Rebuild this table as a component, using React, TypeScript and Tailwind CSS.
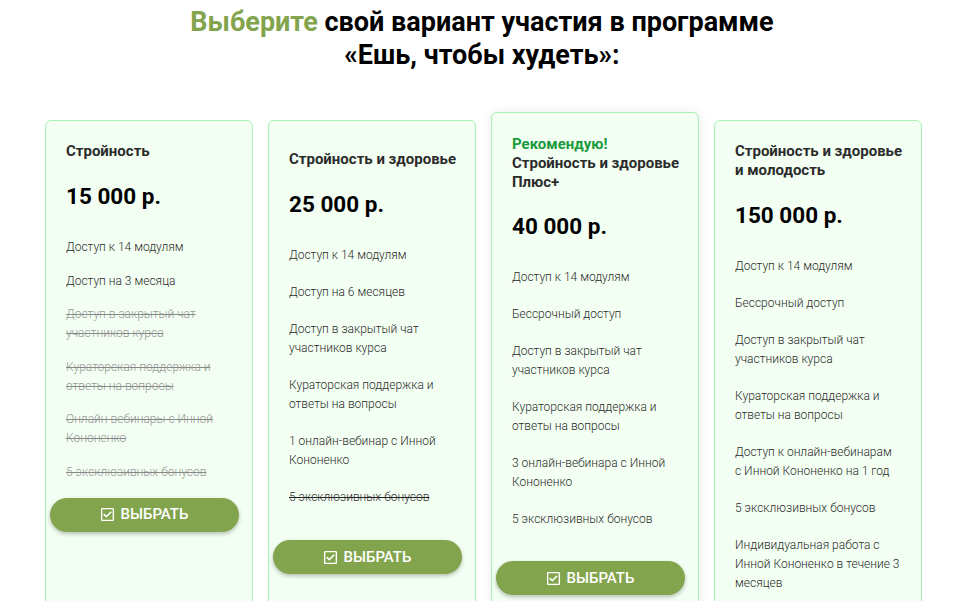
import { FaRegCheckSquare } from 'react-icons/fa';

type Feature = { text: string; off?: boolean; dark?: boolean };

type Plan = {
  badge?: string;
  title: string[];
  price: string;
  features: Feature[];
  pad: string;
  priceGap: string;
  gap: string;
  btnGap: string;
  raised?: boolean;
};

const plans: Plan[] = [
  {
    title: ['Стройность'],
    price: '15 000 р.',
    pad: 'pt-[21px]',
    priceGap: 'mt-[22px]',
    gap: 'gap-[14.5px]',
    btnGap: 'mt-[16px]',
    features: [
      { text: 'Доступ к 14 модулям' },
      { text: 'Доступ на 3 месяца' },
      { text: 'Доступ в закрытый чат участников курса', off: true },
      { text: 'Кураторская поддержка и ответы на вопросы', off: true },
      { text: 'Онлайн вебинары с Инной Кононенко', off: true },
      { text: '5 эксклюзивных бонусов', off: true },
    ],
  },
  {
    title: ['Стройность и здоровье'],
    price: '25 000 р.',
    pad: 'pt-[29px]',
    priceGap: 'mt-[22px]',
    gap: 'gap-[18px]',
    btnGap: 'mt-[33px]',
    features: [
      { text: 'Доступ к 14 модулям' },
      { text: 'Доступ на 6 месяцев' },
      { text: 'Доступ в закрытый чат участников курса' },
      { text: 'Кураторская поддержка и ответы на вопросы' },
      { text: '1 онлайн-вебинар с Инной Кононенко' },
      { text: '5 эксклюзивных бонусов', off: true, dark: true },
    ],
  },
  {
    badge: 'Рекомендую!',
    title: ['Стройность и здоровье', 'Плюс+'],
    price: '40 000 р.',
    pad: 'pt-[22px]',
    priceGap: 'mt-[21px]',
    gap: 'gap-[18px]',
    btnGap: 'mt-[32px]',
    raised: true,
    features: [
      { text: 'Доступ к 14 модулям' },
      { text: 'Бессрочный доступ' },
      { text: 'Доступ в закрытый чат участников курса' },
      { text: 'Кураторская поддержка и ответы на вопросы' },
      { text: '3 онлайн-вебинара с Инной Кононенко' },
      { text: '5 эксклюзивных бонусов' },
    ],
  },
  {
    title: ['Стройность и здоровье', 'и молодость'],
    price: '150 000 р.',
    pad: 'pt-[21px]',
    priceGap: 'mt-[22px]',
    gap: 'gap-[18px]',
    btnGap: 'mt-[33px]',
    features: [
      { text: 'Доступ к 14 модулям' },
      { text: 'Бессрочный доступ' },
      { text: 'Доступ в закрытый чат участников курса' },
      { text: 'Кураторская поддержка и ответы на вопросы' },
      { text: 'Доступ к онлайн-вебинарам с\u00a0Инной Кононенко на 1 год' },
      { text: '5 эксклюзивных бонусов' },
      { text: 'Индивидуальная работа с Инной Кононенко в течение 3 месяцев' },
    ],
  },
];

function PlanCard({ plan }: { plan: Plan }) {
  return (
    <div
      className={`w-[208px] shrink-0 rounded-[6px] border border-[#a6f2b6] bg-[#f3fff3] pb-[60px] ${plan.pad} ${
        plan.raised ? '-mt-[8px] shadow-[0_0_12px_rgba(0,0,0,0.08)]' : ''
      }`}
    >
      <div className="px-[20px]">
        <div className="whitespace-nowrap text-[15px] font-bold leading-[19px] text-[#2b2b2b]">
          {plan.badge && <div className="text-[#1a9a3c]">{plan.badge}</div>}
          {plan.title.map((t) => (
            <div key={t}>{t}</div>
          ))}
        </div>
        <div className={`${plan.priceGap} text-[22.5px] font-bold leading-[26px] text-black`}>{plan.price}</div>
        <ul className={`mt-[29px] flex flex-col ${plan.gap} text-[12px] font-light leading-[19px]`}>
          {plan.features.map((f) => (
            <li
              key={f.text}
              className={
                f.off
                  ? f.dark
                    ? 'text-[#333] line-through decoration-[#222]'
                    : 'text-[#999] line-through decoration-[#888]'
                  : 'text-[#2b2b2b]'
              }
            >
              {f.text}
            </li>
          ))}
        </ul>
      </div>
      <div className={`${plan.btnGap} pl-[4px]`}>
        <button className="flex h-[34px] w-[189px] items-center justify-center gap-[5px] rounded-full bg-[#82a44c] text-[15px] font-medium text-white shadow-[0_2px_4px_rgba(0,0,0,0.25)]">
          <FaRegCheckSquare className="text-[15px]" />
          ВЫБРАТЬ
        </button>
      </div>
    </div>
  );
}

export default function App() {
  return (
    <div className="h-[601px] overflow-hidden bg-white font-['Roboto',sans-serif]">
      <h1 className="pt-[6px] text-center text-[27px] font-bold leading-[33px] text-black">
        <span className="text-[#82a44c]">Выберите</span> свой вариант участия в программе
        <br />
        «Ешь, чтобы худеть»:
      </h1>
      <div className="mt-[48px] flex items-stretch gap-[15px] pl-[45px]">
        {plans.map((p) => (
          <PlanCard key={p.price} plan={p} />
        ))}
      </div>
    </div>
  );
}
